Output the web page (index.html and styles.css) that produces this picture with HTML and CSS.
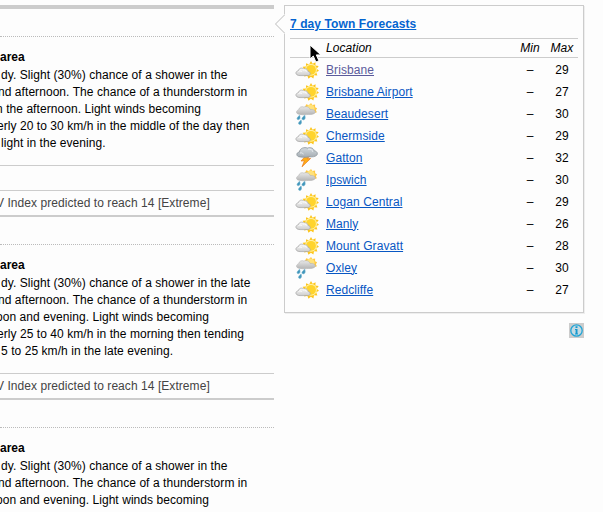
FILE: index.html
```
<!DOCTYPE html>
<html lang="en">
<head>
<meta charset="utf-8">
<title>7 day Town Forecasts</title>
<link rel="stylesheet" href="styles.css">
</head>
<body>
<svg class="defs" width="0" height="0" aria-hidden="true">
  <defs>
    <linearGradient id="cloud" x1="0" y1="0" x2="0" y2="1"><stop offset="0" stop-color="#fafafa"/><stop offset="1" stop-color="#cdcdcd"/></linearGradient>
    <linearGradient id="raincloud" x1="0" y1="0" x2="0" y2="1"><stop offset="0" stop-color="#e8e8e8"/><stop offset="1" stop-color="#b4b4b4"/></linearGradient>
    <linearGradient id="storm" x1="0" y1="0" x2="0" y2="1"><stop offset="0" stop-color="#d3dade"/><stop offset="1" stop-color="#a5adb3"/></linearGradient>
  </defs>
  <symbol id="sunny" viewBox="0 0 24 22">
    <path d="M16 2l1.6 2.8 3-1.6-.2 3.4 3.3.5-2 2.6 2.3 2-2.8 1.6 1.2 3.1-3.4-.2-.6 3.3-2.5-1.8-2.4 2.1-1.1-3-3.2.8.5-3.2-2.8-1.5 2.3-2.3-1.5-2.8 3.2-.2.2-3.3 3 1.2z" fill="#fdc51b"/>
    <circle cx="16" cy="10.8" r="6" fill="#fff0a0"/><circle cx="16" cy="10.8" r="4.9" fill="#ffd42d"/>
    <path d="M5 16.6c-5 0-5.2-4.3-1.6-4.9.6-2.8 3.8-3.3 5.4-1.6 2.3-.8 4.1.6 4.4 2.4 3 .7 2.6 4.1-.8 4.1z" fill="url(#cloud)" stroke="#aaa" stroke-width=".8"/>
    <path d="M3.5 12.5c1.1-.8 2.4-.5 3.2.1M8 10.9c1.7-.5 3 .3 3.3 1.7" fill="none" stroke="#fff" stroke-width="1"/>
  </symbol>
  <symbol id="shower" viewBox="0 0 24 22">
    <path d="M10 4l1.2-2.8L14 2.2l2-2.2 1.4 2.1 2.7-.5v2.7l2 1-1.2 2 1 2-3 1-10-3z" fill="#ffc842"/>
    <circle cx="15.4" cy="5.7" r="4.2" fill="#ffe27a"/>
    <path d="M4 11.2c-3.4-.4-3-3.8-.4-4.3.5-2.9 3.2-3.8 5.3-2.8 2.8-1.3 5.7.3 6.2 2.4 4.2-.6 6.6 2.2 4.2 4-2.7 1.6-5.4.6-8 1.1-2.3.4-4.5.2-7.3-.4z" fill="url(#raincloud)" stroke="#b4b4b4" stroke-width=".6"/>
    <path d="M4.6 12.2q-4.4 3.7-1.4 4.5 2.8-.3 1.4-4.5zm5.1 0q-4.7 3.8-1.5 4.7 3-.5 1.5-4.7zm-3.6 4.7q-4.5 3.7-1.3 4.7 2.6-.5 1.3-4.7z" fill="#4095bb" stroke="#6eb1cc" stroke-width=".6"/>
  </symbol>
  <symbol id="thunder" viewBox="0 0 24 22">
    <path d="M11 8.5L6 14l3.4-.2L7 19.8l8.6-8.3-3.4.2 3.6-3.7z" fill="#ffae16" stroke="#e8751b" stroke-width=".7"/>
    <path d="M5 9.9C.8 9.7 1 5.5 4.3 5.1 5 .9 9.4-.1 12.5 1.1c3.8-1.2 6.5.6 6.7 2.8 3.8.2 4.1 4.2 1.2 5.2-2.5 1.2-4.8.5-7.2.8-3 .6-5.2.3-8.2 0z" fill="url(#storm)" stroke="#8a9399" stroke-width=".8"/>
    <path d="M5 6c2.4-.5 3.1.4 3.2 1.4M13 2.2c3-.5 4.5.8 4.7 2.6" fill="none" stroke="#edf1f4" stroke-width=".9"/>
  </symbol>
</svg>
<div class="page">
  <main class="forecast">
    <section class="day">
      <div class="dayhead"></div>
      <h3>area</h3>
      <p><span class="l a">dy. Slight (30%) chance of a shower in the</span><span class="l b">nd afternoon. The chance of a thunderstorm in</span><span class="l c">n the afternoon. Light winds becoming</span><span class="l d">erly 20 to 30 km/h in the middle of the day then</span><span class="l e">light in the evening.</span></p>
      <div class="spacer"></div>
      <div class="uv">V Index predicted to reach 14 [Extreme]</div>
    </section>
    <section class="day later">
      <div class="dayhead"></div>
      <h3>area</h3>
      <p><span class="l a">dy. Slight (30%) chance of a shower in the late</span><span class="l b">nd afternoon. The chance of a thunderstorm in</span><span class="l f">oon and evening. Light winds becoming</span><span class="l d">erly 25 to 40 km/h in the morning then tending</span><span class="l g">5 to 25 km/h in the late evening.</span></p>
      <div class="uv">V Index predicted to reach 14 [Extreme]</div>
    </section>
    <section class="day later">
      <div class="dayhead"></div>
      <h3>area</h3>
      <p><span class="l a">dy. Slight (30%) chance of a shower in the</span><span class="l b">nd afternoon. The chance of a thunderstorm in</span><span class="l f">oon and evening. Light winds becoming</span></p>
    </section>
  </main>
  <aside>
    <div class="panel">
      <svg class="notch" width="10" height="20" viewBox="0 0 10 20"><path d="M9.5 0v1L.5 10l9 9v1h.5V0z" fill="#fdfdfd"/><path d="M9.5 1L.5 10l9 9" fill="none" stroke="#bbb"/></svg>
      <h2><a href="#">7 day Town Forecasts</a></h2>
      <div class="row head"><span></span><span>Location</span><span>Min</span><span>Max</span></div>
      <div class="row"><svg><use href="#sunny"/></svg><a class="visited" href="#">Brisbane</a><span>–</span><span>29</span></div>
      <div class="row"><svg><use href="#sunny"/></svg><a href="#">Brisbane Airport</a><span>–</span><span>27</span></div>
      <div class="row"><svg><use href="#shower"/></svg><a href="#">Beaudesert</a><span>–</span><span>30</span></div>
      <div class="row"><svg><use href="#sunny"/></svg><a href="#">Chermside</a><span>–</span><span>29</span></div>
      <div class="row"><svg><use href="#thunder"/></svg><a href="#">Gatton</a><span>–</span><span>32</span></div>
      <div class="row"><svg><use href="#shower"/></svg><a href="#">Ipswich</a><span>–</span><span>30</span></div>
      <div class="row"><svg><use href="#sunny"/></svg><a href="#">Logan Central</a><span>–</span><span>29</span></div>
      <div class="row"><svg><use href="#sunny"/></svg><a href="#">Manly</a><span>–</span><span>26</span></div>
      <div class="row"><svg><use href="#sunny"/></svg><a href="#">Mount Gravatt</a><span>–</span><span>28</span></div>
      <div class="row"><svg><use href="#shower"/></svg><a href="#">Oxley</a><span>–</span><span>30</span></div>
      <div class="row"><svg><use href="#sunny"/></svg><a href="#">Redcliffe</a><span>–</span><span>27</span></div>
      <svg class="cursor" width="14" height="20" viewBox="0 0 14 20"><path d="M1 1v14l3.3-3 2.6 6 3-1.3-2.6-5.8h4.6z" fill="#000" stroke="#fff" stroke-width="1"/></svg>
    </div>
    <svg class="info" width="15" height="15" viewBox="0 0 15 15"><path d="M0 0h15v15H0z" fill="#ccc"/><circle cx="7.5" cy="7.5" r="5.7" fill="#c5dae2" stroke="#21a4d5" stroke-width="1.3"/><path d="M6.5 3.3h2v1.6h-2zM6 6h2.5v4.4H9v1H6v-1h.6V7H6z" fill="#1599cf"/></svg>
  </aside>
</div>
</body>
</html>
```
FILE: styles.css
```
* { box-sizing: border-box; }
body { margin: 0; background: #fdfdfd; color: #000; font: 12px/17px "Liberation Sans", Arial, sans-serif; letter-spacing: .06px; overflow: hidden; }
.defs { position: absolute; }
.page { display: flex; height: 512px; padding-top: 5px; overflow: hidden; }
.forecast { width: 274px; overflow: hidden; }
.day { border-top: 4px solid #ccc; }
.day.later { border-top-width: 2px; }
.dayhead { height: 28px; border-bottom: 1px dotted #bbb; }
h3 { margin: 12px 0 0; font-size: 12px; line-height: 17px; letter-spacing: 0; }
p { margin: 1px 0 0; }
.l { display: block; height: 17px; white-space: nowrap; }
.a { margin-left: 1px; }
.b { margin-left: -2px; }
.c { margin-left: -4px; }
.d { margin-left: -3px; }
.e { margin-left: 1px; }
.f { margin-left: -4px; }
.g { margin-left: 1px; }
.spacer { height: 14px; border-bottom: 1px solid #ccc; }
.uv { height: 25px; margin-top: 13px; padding: 4px 0 0; margin-left: -4px; border-top: 1px solid #ccc; color: #444; white-space: nowrap; }
.spacer + .uv { margin-top: 24px; }
aside { width: 300px; margin-left: 10px; display: flex; flex-direction: column; align-items: flex-end; }
.panel { position: relative; width: 300px; height: 308px; padding: 10px 5px 0; border: 1px solid #ccc; box-shadow: 1px 1px 0 #eee; }
h2 { margin: 0; height: 22px; font-size: 12px; line-height: 17px; letter-spacing: .09px; }
a { color: #0857c3; text-decoration: underline; }
.row a { letter-spacing: .08px; justify-self: start; }
h2 a { color: #0464d0; }
.row .visited { color: #5b5b9b; }
.row { display: grid; grid-template-columns: 36px 1fr 32px 32px; height: 22px; align-items: center; }
.row span:nth-child(n+3) { text-align: center; }
.head { height: 20px; border: solid #ccc; border-width: 1px 0; font-style: italic; margin-bottom: 1px; }
.row svg { width: 24px; height: 22px; margin-left: 5px; }
.notch { position: absolute; left: -10px; top: 8px; }
.cursor { position: absolute; left: 24px; top: 38px; }
.info { margin-top: 10px; }
```
